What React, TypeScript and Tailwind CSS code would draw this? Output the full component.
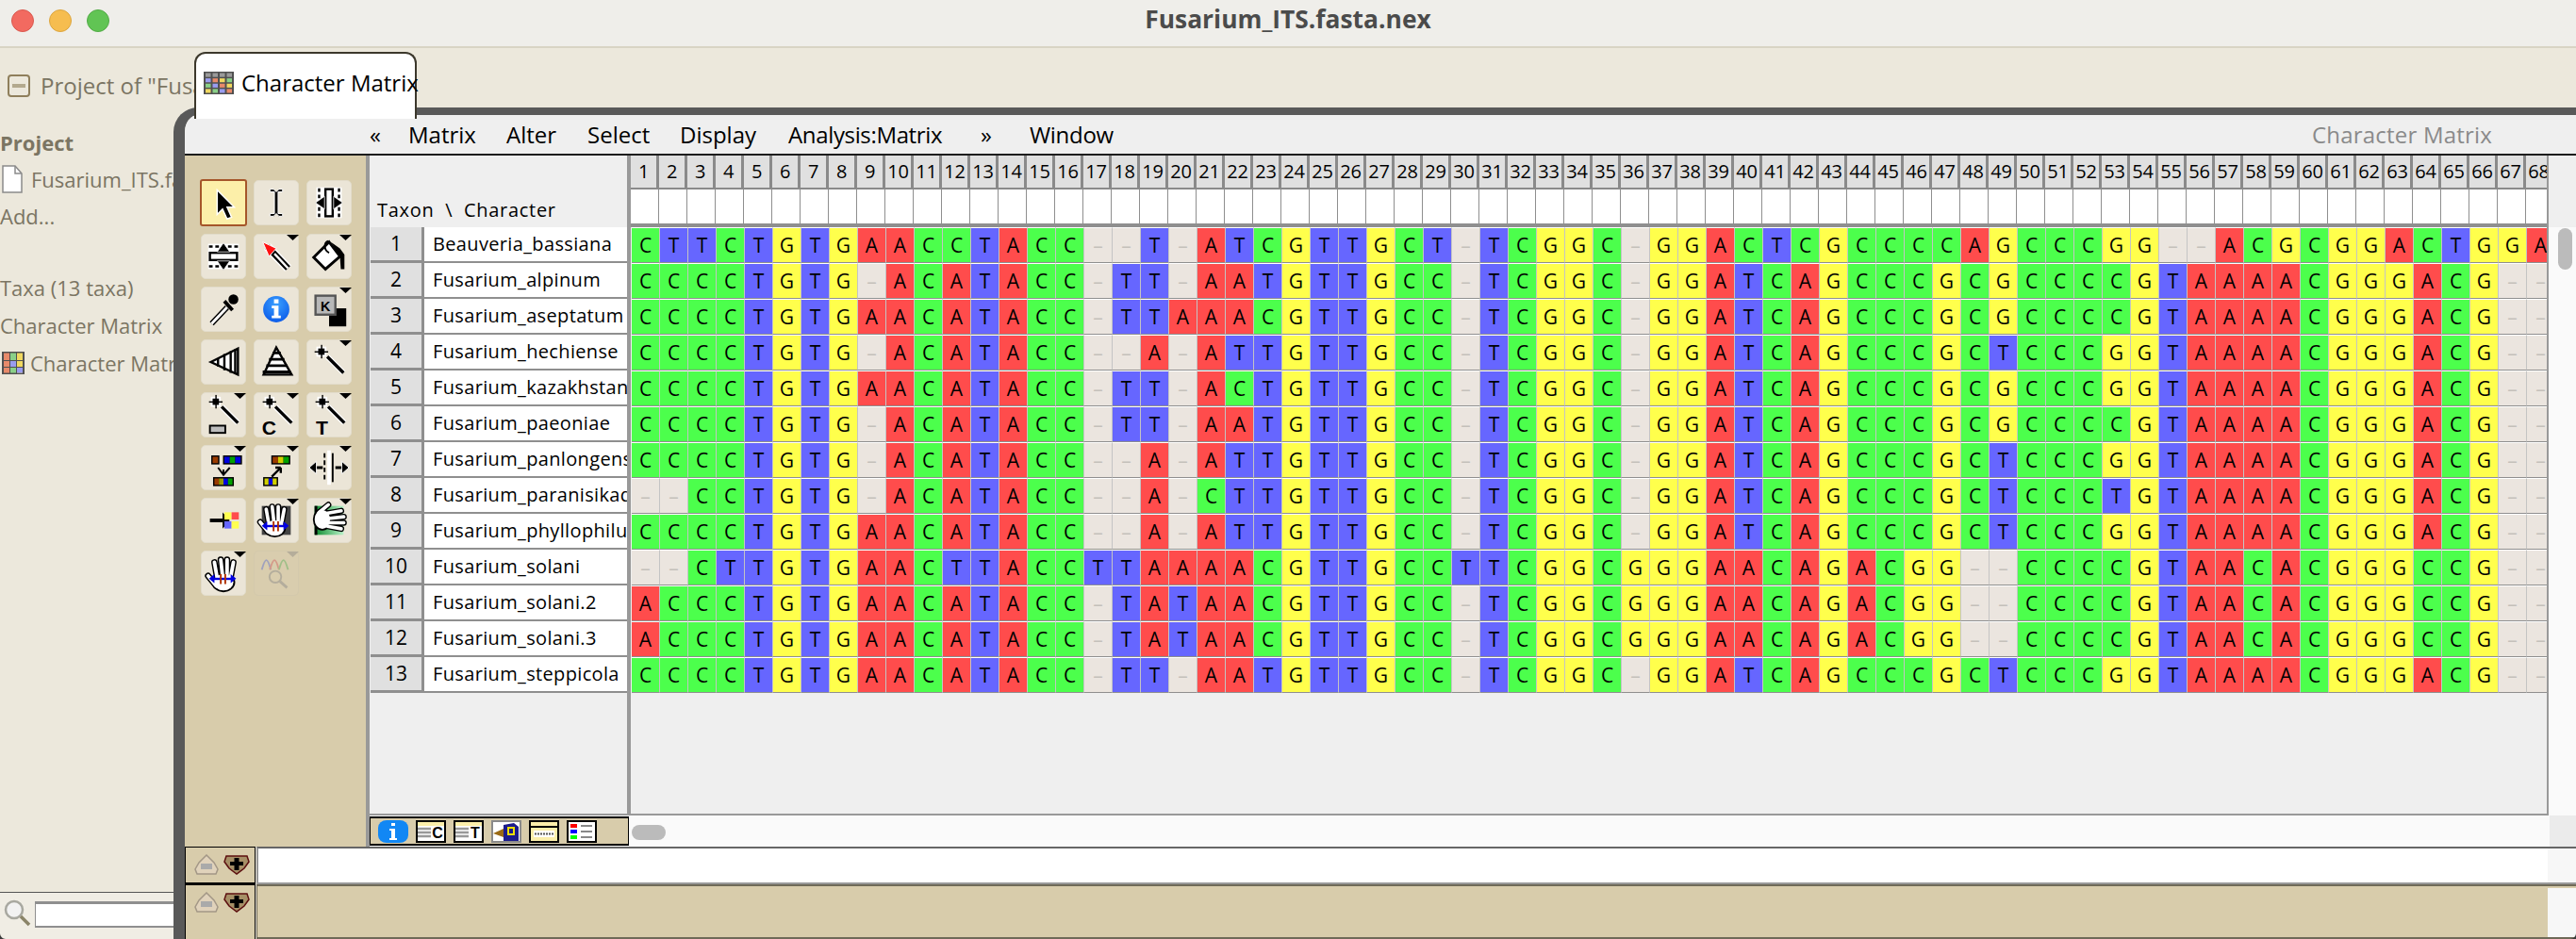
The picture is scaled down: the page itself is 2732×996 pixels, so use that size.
import React from 'react';

const B_COMMON = 'GTTGCC-TCGGC-GGATCAGCCC';
const B_SOLANI = 'GTTGCC-TCGGCGGGAACAGACG';
const C_A = 'GCGCCCCGTAAAACGGGACG--';
const C_B = 'GCTCCCGGTAAAACGGGACG--';
const C_C = 'GCGCCCGGTAAAACGGGACG--';
const C_SOLANI = 'G--CCCCGTAACACGGGCCG--';

const taxa = [
  { name: 'Beauveria_bassiana', seq: 'CTTCTGTGAACCTACC--T-ATC' + 'GTTGCT-TCGGC-GGACTCGCCC' + 'CAGCCCGG--ACGCGGACTGGA' },
  { name: 'Fusarium_alpinum', seq: 'CCCCTGTG-ACATACC-TT-AAT' + B_COMMON + C_A },
  { name: 'Fusarium_aseptatum', seq: 'CCCCTGTGAACATACC-TTAAAC' + B_COMMON + C_A },
  { name: 'Fusarium_hechiense', seq: 'CCCCTGTG-ACATACC--A-ATT' + B_COMMON + C_B },
  { name: 'Fusarium_kazakhstanicum', seq: 'CCCCTGTGAACATACC-TT-ACT' + B_COMMON + C_C },
  { name: 'Fusarium_paeoniae', seq: 'CCCCTGTG-ACATACC-TT-AAT' + B_COMMON + C_A },
  { name: 'Fusarium_panlongense', seq: 'CCCCTGTG-ACATACC--A-ATT' + B_COMMON + C_B },
  { name: 'Fusarium_paranisikadoi', seq: '--CCTGTG-ACATACC--A-CTT' + B_COMMON + 'GCTCCCTGTAAAACGGGACG--' },
  { name: 'Fusarium_phyllophilum', seq: 'CCCCTGTGAACATACC--A-ATT' + B_COMMON + C_B },
  { name: 'Fusarium_solani', seq: '--CTTGTGAACTTACCTTAAAAC' + 'GTTGCCTTCGGCGGGAACAGACG' + C_SOLANI },
  { name: 'Fusarium_solani.2', seq: 'ACCCTGTGAACATACC-TATAAC' + B_SOLANI + C_SOLANI },
  { name: 'Fusarium_solani.3', seq: 'ACCCTGTGAACATACC-TATAAC' + B_SOLANI + C_SOLANI },
  { name: 'Fusarium_steppicola', seq: 'CCCCTGTGAACATACC-TT-AAT' + B_COMMON + C_B },
];

const baseClass: Record<string, string> = {
  A: 'bg-[#ff4c4c] text-black',
  C: 'bg-[#4cff4c] text-black',
  G: 'bg-[#ffff4c] text-black',
  T: 'bg-[#6666ff] text-black',
  '-': 'bg-[#ebe5df] text-[#c4c0ba]',
};

const columns = Array.from({ length: 68 }, (_, i) => i + 1);

// Toolbar pictures, all on a 48 box
const Svg = ({ children, box = 48 }: { children: React.ReactNode; box?: number }) => (
  <svg viewBox={`0 0 ${box} ${box}`} className="w-full h-full block">
    {children}
  </svg>
);

const Wand = () => (
  <>
    <line x1="22" y1="18" x2="40" y2="36" stroke="#fff" strokeWidth="6" />
    <line x1="22" y1="18" x2="40" y2="36" stroke="#000" strokeWidth="3.5" />
    <rect x="10" y="7" width="11" height="11" fill="#fff" />
    <rect x="12" y="9" width="7" height="7" fill="#000" />
    <rect x="8" y="12" width="15" height="1.5" fill="#000" />
    <rect x="15" y="5" width="1.5" height="15" fill="#000" />
  </>
);

const Strip = ({ x, y, colors, w = 6, h = 7 }: { x: number; y: number; colors: string[]; w?: number; h?: number }) => (
  <>
    <rect x={x - 1.5} y={y - 1.5} width={colors.length * w + 3} height={h + 3} fill="#000" />
    {colors.map((c, i) => (
      <rect key={i} x={x + i * w} y={y} width={w} height={h} fill={c} />
    ))}
  </>
);

const HandShape = ({ fill = '#fff' }: { fill?: string }) => (
  <g strokeLinecap="round" fill="none">
    <path d="M13 9 L16 26 M20 6 L22 24 M27 6 L27 24 M34 9 L31 25 M6 24 L15 35" stroke="#000" strokeWidth="7" />
    <ellipse cx="23" cy="31" rx="12" ry="10" fill="#000" stroke="#000" strokeWidth="2" />
    <path d="M13 9 L16 26 M20 6 L22 24 M27 6 L27 24 M34 9 L31 25 M6 24 L15 35" stroke={fill} strokeWidth="4" />
    <ellipse cx="23" cy="31" rx="11" ry="9" fill={fill} />
  </g>
);

const BlueArrows = () => (
  <>
    <rect x="11" y="29" width="24" height="2.5" fill="#0000e0" />
    <path d="M8 30 L14 25 L14 35 Z M38 30 L32 25 L32 35 Z" fill="#0000e0" />
    <rect x="20" y="25" width="2" height="11" fill="#b03000" />
    <rect x="25" y="25" width="2" height="11" fill="#b03000" />
  </>
);

const DashCols = () => (
  <>
    <rect x="10" y="7" width="28" height="34" fill="#fff" />
    <line x1="13" y1="8" x2="13" y2="40" stroke="#000" strokeWidth="2.5" strokeDasharray="4 3" />
    <line x1="35" y1="8" x2="35" y2="40" stroke="#000" strokeWidth="2.5" strokeDasharray="4 3" />
    <rect x="20" y="9" width="8" height="30" fill="#fff" stroke="#000" strokeWidth="2.5" />
    <path d="M9 24 L19 17 L19 31 Z M39 24 L29 17 L29 31 Z" fill="#000" stroke="#fff" strokeWidth="0.8" />
  </>
);

const toolIcons: React.ReactNode[] = [
  <Svg key="arrow">
    <path d="M17 10 L17 37 L23 31 L28 42 L33 40 L28 29 L36 29 Z" fill="#000" stroke="#fff" strokeWidth="1.5" />
  </Svg>,
  <Svg key="ibeam">
    <path d="M17 9 H21 L24 12 L27 9 H31 V12 H26 V36 H31 V39 H27 L24 36 L21 39 H17 V36 H22 V12 H17 Z" fill="#000" stroke="#fff" strokeWidth="1" />
  </Svg>,
  <Svg key="colsize">
    <DashCols />
  </Svg>,
  <Svg key="rowsize">
    <g transform="rotate(90 24 24)">
      <DashCols />
    </g>
  </Svg>,
  <Svg key="pencil">
    <line x1="14" y1="13" x2="37" y2="37" stroke="#fff" strokeWidth="10" />
    <line x1="14" y1="13" x2="37" y2="37" stroke="#000" strokeWidth="7" />
    <line x1="22" y1="21" x2="37" y2="37" stroke="#fff" strokeWidth="2.5" />
    <path d="M9 8 L24 15 L16 24 Z" fill="#ff1010" stroke="#fff" strokeWidth="1" />
  </Svg>,
  <Svg key="bucket">
    <path d="M7 25 L24 8 L36 24 L20 38 Z" fill="#fff" stroke="#000" strokeWidth="3" />
    <path d="M23 7 C18 9 18 17 24 20" fill="none" stroke="#000" strokeWidth="2" />
    <path d="M26 8 L36 15 L41 22 L41 38 L37 38 L36 24 Z" fill="#000" />
  </Svg>,
  <Svg key="dropper">
    <line x1="11" y1="40" x2="28" y2="22" stroke="#000" strokeWidth="6" />
    <line x1="11" y1="40" x2="28" y2="22" stroke="#fff" strokeWidth="3" />
    <circle cx="35" cy="13" r="5.5" fill="#000" />
    <line x1="25" y1="15" x2="34" y2="25" stroke="#000" strokeWidth="4" />
  </Svg>,
  <Svg key="info">
    <defs>
      <radialGradient id="infoFill" cx="50%" cy="30%" r="75%">
        <stop offset="0%" stopColor="#3aa0ff" />
        <stop offset="100%" stopColor="#0a58e8" />
      </radialGradient>
    </defs>
    <circle cx="24" cy="24" r="14.5" fill="url(#infoFill)" />
    <rect x="21.5" y="13" width="5" height="4.5" fill="#fff" />
    <path d="M19 20 H26.5 V31 H29 V34 H19 V31 H21.5 V23 H19 Z" fill="#fff" />
  </Svg>,
  <Svg key="key">
    <rect x="24" y="23" width="19" height="20" fill="#000" />
    <rect x="9" y="9" width="22" height="21" fill="#b8b8b8" stroke="#555" strokeWidth="2.5" />
    <text x="20" y="26" textAnchor="middle" fontSize="15" fontWeight="700" fontFamily="Liberation Sans, sans-serif" fill="#000">K</text>
  </Svg>,
  <Svg key="wedge">
    <path d="M10 24 L40 9 V38 Z" fill="#fff" stroke="#000" strokeWidth="2.5" />
    <path d="M18 20 V29 M25 15 V33 M32 12 V36 M37 10 V37" stroke="#000" strokeWidth="2.5" />
  </Svg>,
  <Svg key="pyramid">
    <path d="M24 8 L41 38 H10 Z" fill="#fff" stroke="#000" strokeWidth="2.5" />
    <path d="M20 14 H29 M16 21 H33 M13 28 H36 M9 35 H40" stroke="#000" strokeWidth="3" />
  </Svg>,
  <Svg key="wand">
    <Wand />
  </Svg>,
  <Svg key="wandrect">
    <g transform="translate(0 -3)">
      <Wand />
    </g>
    <rect x="9" y="36" width="17" height="8" fill="#bdbdbd" stroke="#000" strokeWidth="2" />
  </Svg>,
  <Svg key="wandc">
    <g transform="translate(1 -3)">
      <Wand />
    </g>
    <text x="16" y="46" textAnchor="middle" fontSize="22" fontWeight="900" fontFamily="Liberation Sans, sans-serif" fill="#000">C</text>
  </Svg>,
  <Svg key="wandt">
    <g transform="translate(1 -3)">
      <Wand />
    </g>
    <text x="16" y="46" textAnchor="middle" fontSize="22" fontWeight="900" fontFamily="Liberation Sans, sans-serif" fill="#000">T</text>
  </Svg>,
  <Svg key="transfer">
    <Strip x={12} y={12} colors={['#9a3b00']} />
    <Strip x={25} y={12} colors={['#0000e0', '#00a000', '#0000e0']} />
    <path d="M18 24 L24 32 L31 24 M24 32 V26" stroke="#000" fill="none" strokeWidth="2" />
    <Strip x={14} y={36} colors={['#9a3b00', '#9a9a00', '#0000e0', '#00a000']} w={5} />
  </Svg>,
  <Svg key="transfer2">
    <Strip x={20} y={12} colors={['#9a3b00', '#d0d000', '#00a000']} />
    <path d="M29 24 L19 34 M29 24 H23 M29 24 V30" stroke="#000" fill="none" strokeWidth="2.5" />
    <Strip x={11} y={36} colors={['#d0d000', '#0000e0', '#d0d000']} w={4.5} />
  </Svg>,
  <Svg key="splitcols">
    <line x1="24" y1="5" x2="24" y2="43" stroke="#fff" strokeWidth="4" />
    <line x1="19" y1="8" x2="19" y2="40" stroke="#000" strokeWidth="2" strokeDasharray="5 3" />
    <line x1="28" y1="8" x2="28" y2="40" stroke="#000" strokeWidth="2" />
    <path d="M3 24 H17 M31 24 H45" stroke="#000" strokeWidth="3" />
    <path d="M2 24 L10 17 V31 Z M46 24 L38 17 V31 Z" fill="#000" stroke="#fff" strokeWidth="1" />
  </Svg>,
  <Svg key="togrid">
    <rect x="9" y="22" width="14" height="4" fill="#000" />
    <path d="M23 15 L31 24 L23 33 Z" fill="#000" />
    <rect x="25" y="15" width="8" height="8" fill="#ffff50" />
    <rect x="33" y="15" width="8" height="8" fill="#ff4c4c" />
    <rect x="25" y="25" width="8" height="8" fill="#6666ff" />
    <rect x="33" y="25" width="8" height="8" fill="#ffff50" />
  </Svg>,
  <Svg key="handdark">
    <rect x="8" y="8" width="32" height="32" fill="#444" />
    <g transform="translate(0.5 3) scale(0.95)">
      <HandShape />
    </g>
    <BlueArrows />
  </Svg>,
  <Svg key="handgreen">
    <defs>
      <linearGradient id="greenFill" x1="0" y1="0" x2="1" y2="0">
        <stop offset="0%" stopColor="#0b8a2c" />
        <stop offset="100%" stopColor="#b9f2c9" />
      </linearGradient>
    </defs>
    <rect x="8" y="8" width="32" height="32" fill="url(#greenFill)" />
    <rect x="8" y="8" width="3" height="32" fill="#000" />
    <g transform="rotate(90 24 24) translate(1 2) scale(0.95)">
      <HandShape />
    </g>
  </Svg>,
  <Svg key="handblue">
    <g transform="translate(1 3)">
      <HandShape />
    </g>
    <BlueArrows />
  </Svg>,
  <Svg key="chromatogram">
    <g opacity="0.45" fill="none" strokeWidth="2">
      <path d="M8 20 C12 6 14 6 18 20" stroke="#5c6ed0" />
      <path d="M17 20 C21 6 23 6 27 20" stroke="#d05c5c" />
      <path d="M27 20 C31 6 33 6 37 20" stroke="#5cb05c" />
      <circle cx="23" cy="28" r="6.5" stroke="#888" />
      <line x1="28" y1="33" x2="36" y2="40" stroke="#888" strokeWidth="3" />
    </g>
  </Svg>,
];

// index 0.. order; which have the little menu triangle
const withMenu = new Set([4, 5, 8, 11, 12, 13, 14, 15, 16, 17, 19, 20, 21, 22]);

const MenuMark = ({ faded }: { faded?: boolean }) => (
  <svg viewBox="0 0 13 6" className="absolute top-0 right-[-1px] w-[13px] h-[6px]">
    <path d="M0 0 H13 L6.5 6 Z" fill={faded ? '#b5ad9a' : '#000'} />
  </svg>
);

const ToolButton = ({ index }: { index: number }) => {
  const selected = index === 0;
  const disabled = index === 22;
  return (
    <div
      className={
        selected
          ? 'relative w-[50px] h-[50px] -ml-px -mt-px rounded-[3px] border-2 border-[#a5562a] bg-[#fcefa9]'
          : disabled
            ? 'relative w-[48px] h-[48px] rounded-[5px] border border-[#d4c9ac] bg-[#d9cdae]'
            : 'relative w-[48px] h-[48px] rounded-[5px] border border-[#e2dccb] bg-[#ebe5d7]'
      }
    >
      {toolIcons[index]}
      {withMenu.has(index) && <MenuMark faded={disabled} />}
    </div>
  );
};

const tabIcons: React.ReactNode[] = [
  <svg key="i" viewBox="0 0 32 24" className="w-full h-full block">
    <rect width="32" height="24" rx="9" ry="8" fill="#1187f4" />
    <rect x="14" y="3" width="4" height="3" fill="#fff" />
    <path d="M12 9 H18 V19 H20 V21 H12 V19 H14 V11 H12 Z" fill="#fff" />
  </svg>,
  <svg key="c" viewBox="0 0 32 24" className="w-full h-full block">
    <rect width="32" height="24" fill="#000" />
    <rect x="2" y="2" width="28" height="20" fill="#fff" />
    <rect x="2" y="2" width="28" height="4" fill="#fbeeaa" />
    <path d="M2 9 H16 M2 13 H16 M2 17 H16" stroke="#999" strokeWidth="2.5" />
    <text x="23" y="19" textAnchor="middle" fontSize="16" fontWeight="900" fontFamily="Liberation Sans, sans-serif" fill="#000">C</text>
  </svg>,
  <svg key="t" viewBox="0 0 32 24" className="w-full h-full block">
    <rect width="32" height="24" fill="#000" />
    <rect x="2" y="2" width="28" height="20" fill="#fff" />
    <rect x="2" y="2" width="28" height="4" fill="#fbeeaa" />
    <path d="M2 9 H16 M2 13 H16 M2 17 H16" stroke="#999" strokeWidth="2.5" />
    <text x="23" y="19" textAnchor="middle" fontSize="16" fontWeight="900" fontFamily="Liberation Sans, sans-serif" fill="#000">T</text>
  </svg>,
  <svg key="bird" viewBox="0 0 32 24" className="w-full h-full block">
    <rect width="32" height="24" fill="#8a8a8a" />
    <rect x="2" y="2" width="28" height="20" fill="#fff" />
    <path d="M13 5 L24 3 L29 7 V22 H13 Z" fill="#1c1c8c" />
    <path d="M2 14 L13 9 V18 Z" fill="#9a6a14" />
    <rect x="17" y="7" width="8" height="9" fill="#f0e000" />
    <rect x="19" y="9" width="4" height="5" fill="#1c1c8c" />
  </svg>,
  <svg key="win" viewBox="0 0 32 24" className="w-full h-full block">
    <rect width="32" height="24" fill="#000" />
    <rect x="2" y="2" width="28" height="20" fill="#fbeeaa" />
    <rect x="2" y="6" width="28" height="2" fill="#000" />
    <rect x="5" y="11" width="22" height="7" fill="#fff" />
    <path d="M6 14.5 H26" stroke="#555" strokeWidth="2" strokeDasharray="2 1" />
  </svg>,
  <svg key="list" viewBox="0 0 32 24" className="w-full h-full block">
    <rect width="32" height="24" fill="#000" />
    <rect x="2" y="2" width="28" height="20" fill="#fff" />
    <rect x="4" y="4" width="7" height="4" fill="#ff0000" />
    <rect x="4" y="10" width="7" height="4" fill="#0000ff" />
    <rect x="4" y="16" width="7" height="4" fill="#00ff00" />
    <path d="M15 6 H27 M15 12 H27 M15 18 H27" stroke="#888" strokeWidth="2" />
  </svg>,
];

const DropButtons = () => (
  <div className="flex gap-[4px] pl-[8px] pt-[7px]">
    <svg viewBox="0 0 28 22" className="w-[28px] h-[22px]">
      <path d="M14 1 L22 9 L26 16 L24 21 H4 L2 16 L6 9 Z" fill="#e0d2bb" stroke="#a39786" strokeWidth="1.5" />
      <rect x="8" y="10" width="12" height="6" fill="#aaa" />
    </svg>
    <svg viewBox="0 0 28 22" className="w-[28px] h-[22px]">
      <path d="M3 2 H25 L27 8 L22 15 L14 21 L6 15 L1 8 Z" fill="#a68f66" stroke="#5c0f0f" strokeWidth="1.5" />
      <path d="M11.5 4 H16.5 V8 H21 V12 H16.5 V17 H11.5 V12 H7 V8 H11.5 Z" fill="#000" />
    </svg>
  </div>
);

export default function App() {
  return (
    <div className="relative w-[2732px] h-[996px] flex flex-col overflow-hidden bg-[#ece8dc] [font-family:'Open_Sans',sans-serif]">
      {/* TITLE BAR */}
      <div className="h-[51px] shrink-0 relative flex items-center justify-center bg-[#efeeea] border-b-2 border-[#d8d4c4]">
        <div className="absolute left-[12px] top-[10px] flex gap-[16px]">
          <div className="w-[24px] h-[24px] rounded-full bg-[#f26a60] border border-[#d9584e]" />
          <div className="w-[24px] h-[24px] rounded-full bg-[#f6bd4f] border border-[#dca63f]" />
          <div className="w-[24px] h-[24px] rounded-full bg-[#61c454] border border-[#52ab46]" />
        </div>
        <span className="text-[26.4px] font-bold text-[#4b4b4b] leading-none pb-[8px]">Fusarium_ITS.fasta.nex</span>
      </div>

      {/* TAB STRIP */}
      <div className="h-[63px] shrink-0 flex items-start relative z-10">
        <div className="w-[206px] h-[63px] pt-[27px] pl-[8px] flex items-start gap-[11px] overflow-hidden text-[#7b7563] text-[24px] leading-[26px] whitespace-nowrap">
          <svg viewBox="0 0 24 24" className="w-[24px] h-[24px] shrink-0 mt-[1px]">
            <rect x="1" y="1" width="22" height="22" rx="3" fill="#ece8dc" stroke="#8f7f5c" strokeWidth="2" />
            <rect x="5" y="10" width="14" height="4" fill="#b3a98e" />
          </svg>
          <span>Project of "Fusarium</span>
        </div>
        <div className="w-[236px] h-[71px] mt-[4px] shrink-0 flex items-start pt-[18px] pl-[8px] gap-[8px] bg-white border-2 border-b-0 border-[#3c382c] rounded-t-[12px]">
          <svg viewBox="0 0 32 32" preserveAspectRatio="none" className="w-[32px] h-[24px] shrink-0 mt-[1px]">
            <rect width="32" height="32" fill="#505050" />
            {[0, 1, 2, 3].map((r) =>
              [0, 1, 2, 3].map((c) => (
                <rect
                  key={`${r}-${c}`}
                  x={2 + c * 7.5}
                  y={2 + r * 7.5}
                  width="5.5"
                  height="5.5"
                  fill={
                    r === 0
                      ? '#9a9a9a'
                      : ['#e88a6a', '#f0d860', '#8ad088', '#9a9cf0'][(c + r * 3) % 4]
                  }
                />
              ))
            )}
          </svg>
          <span className="text-[24px] leading-[26px] text-black whitespace-nowrap">Character Matrix</span>
        </div>
      </div>

      <div className="flex-1 flex min-h-0">
        {/* PROJECT SIDEBAR */}
        <div className="w-[184px] shrink-0 flex flex-col overflow-hidden text-[#7b7563] text-[22px] leading-[26px] whitespace-nowrap">
          <div className="flex-1 pt-[24px]">
            <div className="font-bold">Project</div>
            <div className="flex items-center gap-[9px] mt-[11px] h-[30px] pl-[2px]">
              <svg viewBox="0 0 22 30" className="w-[22px] h-[30px] shrink-0">
                <path d="M1 1 H14 L21 9 V29 H1 Z" fill="#fff" stroke="#8a8a8a" strokeWidth="1.5" />
                <path d="M14 1 V9 H21" fill="none" stroke="#8a8a8a" strokeWidth="1.5" />
              </svg>
              <span>Fusarium_ITS.fasta.nex</span>
            </div>
            <div className="mt-[11px]">Add...</div>
            <div className="mt-[50px]">Taxa (13 taxa)</div>
            <div className="mt-[14px]">Character Matrix</div>
            <div className="flex items-center gap-[6px] mt-[14px] pl-[2px]">
              <svg viewBox="0 0 24 24" className="w-[24px] h-[24px] shrink-0">
                <rect width="24" height="24" fill="#505050" />
                <rect x="2" y="1.5" width="6" height="21" fill="#e88a6a" />
                <rect x="9" y="1.5" width="6" height="21" fill="#8ad088" />
                <rect x="16" y="1.5" width="6" height="21" fill="#f0d860" />
                <rect x="2" y="9" width="20" height="1" fill="#505050" />
                <rect x="2" y="16" width="20" height="1" fill="#505050" />
                <rect x="9" y="10" width="6" height="6" fill="#9a9cf0" />
                <rect x="16" y="17" width="6" height="5.5" fill="#9a9cf0" />
              </svg>
              <span>Character Matrix</span>
            </div>
          </div>
          {/* SEARCH */}
          <div className="h-[50px] shrink-0 border-t border-[#555] bg-[#f0ede4] flex items-center relative">
            <svg viewBox="0 0 30 30" className="absolute left-[3px] top-[6px] w-[30px] h-[30px]">
              <circle cx="12" cy="12" r="9" fill="#f2f2f2" stroke="#a8a8a0" strokeWidth="2.5" />
              <line x1="19" y1="19" x2="28" y2="28" stroke="#8a8468" strokeWidth="3.5" />
            </svg>
            <div className="ml-[37px] mb-[3px] w-[147px] h-[28px] bg-white border-t-[3px] border-l border-b-2 border-[#8f8f8f]" />
          </div>
        </div>

        {/* CHARACTER MATRIX WINDOW */}
        <div className="flex-1 min-w-0 flex flex-col border-l-[12px] border-t-[8px] border-[#595959] rounded-tl-[26px] overflow-hidden">
          {/* MENU BAR */}
          <div className="h-[43px] shrink-0 flex items-center bg-[#efefef] border-b-2 border-[#1c1c1c] rounded-tl-[14px] text-[24px] leading-none text-black">
            <span className="ml-[196px] w-[41px]">«</span>
            <span className="w-[104px]">Matrix</span>
            <span className="w-[86px]">Alter</span>
            <span className="w-[98px]">Select</span>
            <span className="w-[115px]">Display</span>
            <span className="w-[204px] tracking-[-0.35px]">Analysis:Matrix</span>
            <span className="w-[52px]">»</span>
            <span className="tracking-[-0.3px]">Window</span>
            <span className="ml-auto mr-[89px] text-[#8a8a8a] tracking-[0.2px]">Character Matrix</span>
          </div>

          <div className="h-[733px] shrink-0 flex">
            {/* TOOL PANEL */}
            <div className="w-[192px] shrink-0 bg-[#d8ccab] pt-[26px] pl-[17px] pr-[11px]">
              <div className="grid grid-cols-[48px_48px_48px] gap-x-[8px] gap-y-[8px]">
                {toolIcons.map((_, i) => (
                  <ToolButton key={i} index={i} />
                ))}
              </div>
            </div>

            {/* TABLE AREA */}
            <div className="w-[2344px] shrink-0 flex flex-col border-l-4 border-[#999] bg-[#fafafa]">
              <div className="h-[700px] shrink-0 flex">
                <div className="w-[2311px] shrink-0 flex bg-[#efefef] border-b-2 border-[#999]">
                  {/* TAXON COLUMN */}
                  <div className="w-[273px] shrink-0 flex flex-col">
                    <div className="h-[76px] shrink-0 flex items-end pl-[8px] pb-[4px] text-[20px] leading-[28px] tracking-[0.7px] text-black">
                      <span className="whitespace-pre">Taxon  \  Character</span>
                    </div>
                    {taxa.map((t, i) => (
                      <div key={t.name} className="h-[38px] shrink-0 flex">
                        <div className="w-[57px] shrink-0 ml-px flex items-center justify-center bg-[#e0e0e0] border-r-[3px] border-b-[3px] border-[#8f8f8f] text-[21px] leading-none text-black">
                          {i + 1}
                        </div>
                        <div className="flex-1 min-w-0 overflow-hidden whitespace-nowrap bg-white border-b-2 border-[#8f8f8f] pl-[9px] text-[20px] leading-[36px] tracking-[0.35px] text-black">
                          {t.name}
                        </div>
                      </div>
                    ))}
                  </div>

                  {/* MATRIX */}
                  <div className="w-[2038px] shrink-0 flex flex-col border-l-4 border-r-2 border-[#999] overflow-hidden">
                    <div className="h-[36px] flex shrink-0">
                      {columns.map((c) => (
                        <div
                          key={c}
                          className="w-[30px] shrink-0 flex items-center justify-center bg-[#e0e0e0] border-r-[3px] border-b-[2px] border-[#8a8a8a] text-[20px] leading-none text-black tracking-[-0.3px]"
                        >
                          {c}
                        </div>
                      ))}
                    </div>
                    <div className="h-[40px] flex shrink-0 bg-white border-b-4 border-[#8f8f8f]">
                      {columns.map((c) => (
                        <div key={c} className="w-[30px] shrink-0 border-r border-[#8f8f8f]" />
                      ))}
                    </div>
                    {taxa.map((t) => (
                      <div key={t.name} className="h-[38px] shrink-0 flex ml-px">
                        {t.seq.split('').map((ch, i) => (
                          <div
                            key={i}
                            className={`w-[30px] shrink-0 flex items-center justify-center border-r border-b border-r-[#c4c4c4] border-b-[#8f8f8f] border-t-white border-t text-[21px] leading-none ${baseClass[ch]}`}
                          >
                            {ch === '-' ? '–' : ch}
                          </div>
                        ))}
                      </div>
                    ))}
                  </div>
                </div>

                {/* RIGHT SCROLL */}
                <div className="w-[29px] shrink-0 flex flex-col">
                  <div className="h-[76px] bg-[#efefef] shrink-0" />
                  <div className="flex-1 bg-[#fafafa] relative">
                    <div className="absolute left-[10px] top-[1px] w-[15px] h-[44px] rounded-[8px] bg-[#bbbbbb]" />
                  </div>
                </div>
              </div>

              {/* TABS + HORIZONTAL SCROLL */}
              <div className="flex-1 flex items-center min-h-0 bg-[#fafafa]">
                <div className="w-[275px] h-[31px] shrink-0 flex items-center gap-[8px] pl-[8px] bg-[#d8ccab] border-t-2 border-b-2 border-x border-black">
                  {tabIcons.map((icon, i) => (
                    <div key={i} className="w-[32px] h-[24px] shrink-0">
                      {icon}
                    </div>
                  ))}
                </div>
                <div className="ml-[3px] mt-[2px] w-[36px] h-[16px] rounded-[8px] bg-[#bbbbbb]" />
                <div className="ml-auto w-[28px] h-full bg-[#ebebeb]" />
              </div>
            </div>
          </div>

          {/* EXPLANATION AREA */}
          <div className="h-[40px] shrink-0 flex">
            <div className="w-[75px] shrink-0 bg-[#d8ccab] border-t border-l border-r border-b-2 border-black">
              <DropButtons />
            </div>
            <div className="flex-1 ml-[1px] bg-white border-t-2 border-l-2 border-b-2 border-t-[#666] border-l-[#999] border-b-[#999] flex justify-end">
              <div className="w-[30px] h-full bg-[#f7f7f7]" />
            </div>
          </div>
          <div className="flex-1 flex min-h-0">
            <div className="w-[75px] shrink-0 bg-[#d8ccab] border-l border-r border-t border-black">
              <DropButtons />
            </div>
            <div className="flex-1 ml-[1px] bg-[#d8ccab] border-t-2 border-l border-b-2 border-[#6f6a58] flex justify-end">
              <div className="w-[30px] mt-[2px] bg-[#f7f7f7]" />
            </div>
          </div>
        </div>
      </div>

      {/* WINDOW CORNERS */}
      <svg viewBox="0 0 6 6" className="absolute left-0 bottom-0 w-[6px] h-[6px]">
        <path d="M0 0 C0 3 3 6 6 6 H0 Z" fill="#3a3a3a" />
      </svg>
      <svg viewBox="0 0 6 6" className="absolute right-0 bottom-0 w-[6px] h-[6px]">
        <path d="M6 0 C6 3 3 6 0 6 H6 Z" fill="#3a3a3a" />
      </svg>
    </div>
  );
}
